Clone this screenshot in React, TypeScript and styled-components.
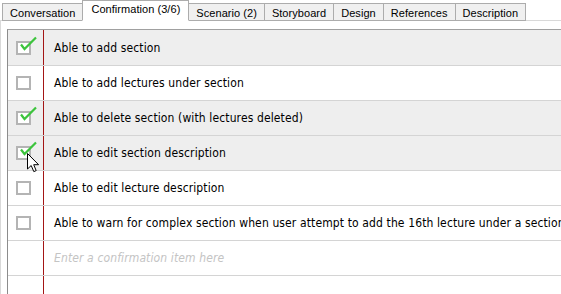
import styled, {createGlobalStyle} from "styled-components";

const GlobalStyle = createGlobalStyle`
  body {
    margin: 0;
    background: #ffffff;
    overflow: hidden;
  }
`

const tabs = [
    {label: 'Conversation'},
    {label: 'Confirmation (3/6)', active: true},
    {label: 'Scenario (2)'},
    {label: 'Storyboard'},
    {label: 'Design'},
    {label: 'References'},
    {label: 'Description'},
];

const items = [
    {text: 'Able to add section', done: true},
    {text: 'Able to add lectures under section', done: false},
    {text: 'Able to delete section (with lectures deleted)', done: true},
    {text: 'Able to edit section description', done: true},
    {text: 'Able to edit lecture description', done: false},
    {text: 'Able to warn for complex section when user attempt to add the 16th lecture under a section', done: false},
];

const Check = ({done}: {done: boolean}) => (
    <CheckBox>
        {done && (
            <svg width="20" height="20" viewBox="0 0 20 20">
                <path d="M3 8.5 L6.5 13 L18 1.5" fill="none" stroke="#3cc43c" strokeWidth="2.2"/>
            </svg>
        )}
    </CheckBox>
);

const Pointer = () => (
    <Cursor width="13" height="20" viewBox="0 0 13 20">
        <path d="M0.5 0.5 L0.5 16 L4.2 12.5 L6.8 18.6 L9.2 17.6 L6.7 11.7 L11.6 11.7 Z"
              fill="#ffffff" stroke="#000000" strokeWidth="1"/>
    </Cursor>
);

const App = () => {
    return (
        <Page>
            <GlobalStyle/>
            <TabBar>
                {tabs.map(t => (
                    <Tab key={t.label} $active={!!t.active}>{t.label}</Tab>
                ))}
            </TabBar>
            <Pane>
                <Table>
                    {items.map((item, i) => (
                        <Row key={i} $done={item.done}>
                            <MarkCell>
                                <Check done={item.done}/>
                            </MarkCell>
                            <TextCell>{item.text}</TextCell>
                        </Row>
                    ))}
                    <Row $done={false}>
                        <MarkCell/>
                        <TextCell $placeholder>Enter a confirmation item here</TextCell>
                    </Row>
                    <Row $done={false}>
                        <MarkCell/>
                        <TextCell/>
                    </Row>
                </Table>
                <Pointer/>
            </Pane>
        </Page>
    );
};

const Page = styled.div`
  width: 561px;
  height: 294px;
  overflow: hidden;
  background: #ffffff;
`

const TabBar = styled.div`
  display: flex;
  align-items: flex-end;
  height: 21px;
  padding-left: 2px;
  position: relative;
  z-index: 1;
`

const Tab = styled.div<{ $active: boolean }>`
  box-sizing: border-box;
  height: ${({$active}) => ($active ? '21px' : '18px')};
  margin-left: -1px;
  padding: ${({$active}) => ($active ? '1px 8px 0 8px' : '2px 7px 0 7px')};
  border: 1px solid #acacac;
  border-bottom: ${({$active}) => ($active ? '1px solid #ffffff' : '1px solid #acacac')};
  background: ${({$active}) => ($active ? '#ffffff' : '#f0f0f0')};
  font-family: "Liberation Sans", Arial, sans-serif;
  font-size: 11px;
  letter-spacing: 0.05px;
  line-height: 14px;
  color: #000;
  white-space: nowrap;
  position: relative;
  z-index: ${({$active}) => ($active ? 2 : 1)};

  &:first-child {
    margin-left: 0;
  }
`

const Pane = styled.div`
  position: relative;
  margin-top: -1px;
  border-top: 1px solid #d9d9d9;
  border-left: 1px solid #d9d9d9;
  padding: 8px 0 0 6px;
  height: 300px;
`

const Table = styled.div`
  border-top: 1px solid #a0a0a0;
  border-left: 1px solid #8c8c8c;
  width: 620px;
`

const Row = styled.div<{ $done: boolean }>`
  display: flex;
  height: 34px;
  border-bottom: 1px solid #d4d4d4;
  background: ${({$done}) => ($done ? '#eeeeee' : '#ffffff')};

  &:first-child {
    height: 35px;
  }
`

const MarkCell = styled.div`
  width: 36px;
  flex: none;
  border-right: 1px solid #a31515;
  display: flex;
  align-items: center;
  padding-left: 8px;
  box-sizing: border-box;
`

const TextCell = styled.div<{ $placeholder?: boolean }>`
  flex: 1;
  display: flex;
  align-items: center;
  padding-left: 10px;
  font-family: "DejaVu Sans Condensed", "DejaVu Sans", Verdana, sans-serif;
  font-size: 12px;
  letter-spacing: 0.12px;
  font-style: ${({$placeholder}) => ($placeholder ? 'italic' : 'normal')};
  color: ${({$placeholder}) => ($placeholder ? '#c4c4c4' : '#000000')};
  white-space: nowrap;
`

const CheckBox = styled.div`
  position: relative;
  width: 15px;
  height: 14px;
  box-sizing: border-box;
  border: 2px solid #b4b4b4;
  background: #ffffff;

  svg {
    position: absolute;
    left: 0;
    top: -7px;
  }
`

const Cursor = styled.svg`
  position: absolute;
  left: 26px;
  top: 132px;
`

export default App;
